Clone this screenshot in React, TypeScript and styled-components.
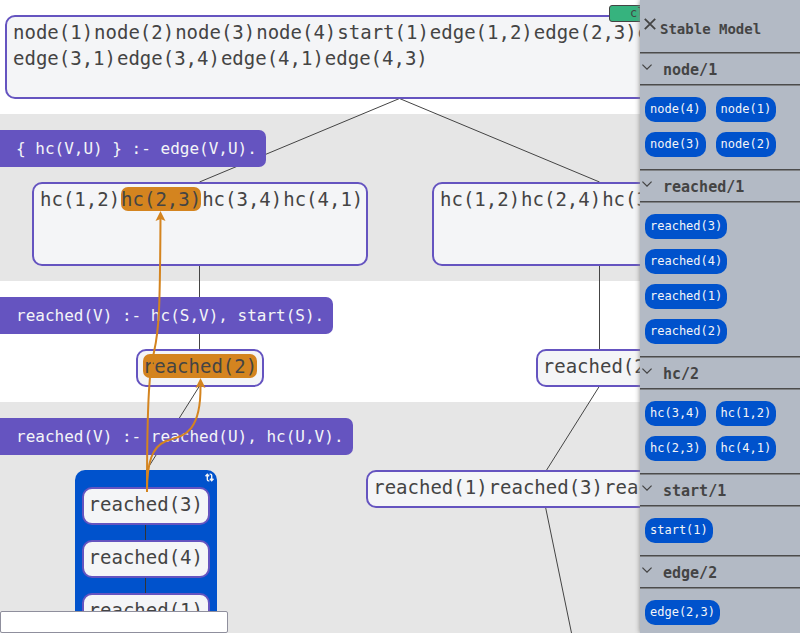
import React from 'react';
import styled, { createGlobalStyle, css } from 'styled-components';

const GlobalStyle = createGlobalStyle`
  * { box-sizing: border-box; }
  html, body, #root { height: 100%; }
  body {
    margin: 0;
    overflow: hidden;
    background: #fff;
    color: #444;
    font-family: "DejaVu Sans Mono", monospace;
  }
`;

const Page = styled.div`
  position: relative;
  height: 100%;
  overflow: hidden;
`;

const Graph = styled.main`
  position: relative;
  min-height: 100%;
  display: flex;
  flex-direction: column;
`;

const Band = styled.section<{ $shaded?: boolean }>`
  display: flex;
  flex-direction: column;
  align-items: flex-start;
  gap: 15px;
  padding: 16px 0 15px;
  background: ${(p) => (p.$shaded ? '#e6e6e6' : '#fff')};

  &:first-child { padding-top: 15px; }
`;

const Rule = styled.div`
  position: relative;
  z-index: 2;
  padding: 0 9px 0 16px;
  border-radius: 0 7px 7px 0;
  background: #6554c0;
  color: #f4f5f7;
  font-size: 16px;
  line-height: 37px;
  white-space: pre;
`;

const Branches = styled.div`
  align-self: stretch;
  display: flex;
  justify-content: space-around;
  align-items: flex-start;
`;

const Node = styled.div<{ $size?: 'root' | 'wide' }>`
  position: relative;
  z-index: 2;
  display: flex;
  flex-wrap: wrap;
  align-content: flex-start;
  column-gap: 1px;
  padding: 2px 5px 6px;
  border: 2px solid #6554c0;
  border-radius: 10px;
  background: #f4f5f7;
  ${(p) => p.$size === 'root' && css`flex: 1; margin: 0 5px; padding: 2px 6px; min-height: 84px;`}
  ${(p) => p.$size === 'wide' && css`padding: 2px 2px 2px 6px; width: 42%; min-height: 84px;`}
`;

const Atom = styled.span<{ $marked?: boolean }>`
  margin: 1px 0;
  border-radius: 7px;
  font-size: 19px;
  line-height: 24px;
  background: ${(p) => (p.$marked ? '#d4841f' : 'transparent')};
`;

const Loop = styled.div`
  position: relative;
  z-index: 2;
  display: flex;
  flex-direction: column;
  align-items: center;
  padding: 17px 7px;
  border-radius: 10px;
  background: #0052cc;
`;

const LoopLink = styled.div`
  width: 1px;
  height: 15px;
  background: #333;
`;

const LoopIcon = styled.svg`
  position: absolute;
  top: 3px;
  right: 3px;
  width: 9px;
  height: 9px;
`;

const Overlay = styled.svg<{ $front?: boolean }>`
  position: absolute;
  top: 0;
  left: 0;
  z-index: ${(p) => (p.$front ? 3 : 1)};
  width: 100%;
  height: 100%;
  overflow: visible;
  pointer-events: none;
  fill: none;
`;

const ClearButton = styled.button`
  position: absolute;
  top: 5px;
  right: 113px;
  z-index: 3;
  width: 78px;
  height: 17px;
  padding: 0;
  border: 1px solid #444;
  border-radius: 3px;
  background: #36b37e;
  color: #444;
  font: 12px/15px "DejaVu Sans Mono", monospace;
`;

const SearchInput = styled.input`
  position: absolute;
  left: 0;
  bottom: 0;
  z-index: 4;
  width: 228px;
  height: 22px;
  border: 1px solid #8f8f9d;
  border-radius: 2px;
  background: #fff;
`;

const Sidebar = styled.aside`
  position: absolute;
  top: 0;
  right: 0;
  bottom: 0;
  z-index: 5;
  width: 160px;
  overflow: hidden;
  background: #b3bac5;
  box-shadow: 0 0 5px #888;
`;

const SidebarHeader = styled.header`
  display: flex;
  align-items: flex-start;
  gap: 4px;
  height: 52px;
  padding: 18px 4px 0;
`;

const IconButton = styled.button`
  display: flex;
  padding: 0;
  border: 0;
  background: none;
  color: inherit;
`;

const Title = styled.h2`
  margin: 0;
  font-size: 14px;
  line-height: 22px;
`;

const SectionToggle = styled.button`
  display: flex;
  align-items: flex-start;
  gap: 11px;
  width: 100%;
  height: 33px;
  padding: 8px 3px 0 2px;
  border: solid #4c4c4c;
  border-width: 1px 0;
  box-shadow: inset 0 1px #808285, 0 1px #808285;
  background: none;
  color: inherit;
  font: bold 15px/18px "DejaVu Sans Mono", monospace;
  text-align: left;
`;

const ChevronIcon = styled.svg`
  flex: none;
  width: 10px;
  height: 6px;
  margin-top: 3px;
`;

const Chips = styled.div`
  display: flex;
  flex-wrap: wrap;
  gap: 10px;
  padding: 12px 5px;
`;

const Chip = styled.span`
  padding: 0 5px;
  border-radius: 10px;
  background: #0052cc;
  color: #f4f5f7;
  font-size: 12px;
  line-height: 25px;
`;

const rootAtoms = [
  'node(1)', 'node(2)', 'node(3)', 'node(4)', 'start(1)', 'edge(1,2)', 'edge(2,3)',
  'edge(2,4)', 'edge(3,1)', 'edge(3,4)', 'edge(4,1)', 'edge(4,3)',
];

const model = [
  { name: 'node/1', atoms: ['node(4)', 'node(1)', 'node(3)', 'node(2)'] },
  { name: 'reached/1', atoms: ['reached(3)', 'reached(4)', 'reached(1)', 'reached(2)'] },
  { name: 'hc/2', atoms: ['hc(3,4)', 'hc(1,2)', 'hc(2,3)', 'hc(4,1)'] },
  { name: 'start/1', atoms: ['start(1)'] },
  { name: 'edge/2', atoms: ['edge(2,3)'] },
];

type AtomsProps = { items: string[]; marked?: string };

const Atoms = ({ items, marked }: AtomsProps) => (
  <>
    {items.map((a) => (
      <Atom key={a} $marked={a === marked}>{a}</Atom>
    ))}
  </>
);

const Chevron = () => (
  <ChevronIcon viewBox="0 0 10 6" fill="none" stroke="currentColor" strokeWidth="1.3">
    <path d="M0.4 0.6 L5 5.1 L9.6 0.6" />
  </ChevronIcon>
);

export default function App() {
  return (
    <Page>
      <GlobalStyle />
      <Graph>
        <Band>
          <Branches>
            <Node $size="root"><Atoms items={rootAtoms} /></Node>
          </Branches>
        </Band>
        <Band $shaded>
          <Rule>{'{ hc(V,U) } :- edge(V,U).'}</Rule>
          <Branches>
            <Node $size="wide">
              <Atoms items={['hc(1,2)', 'hc(2,3)', 'hc(3,4)', 'hc(4,1)']} marked="hc(2,3)" />
            </Node>
            <Node $size="wide">
              <Atoms items={['hc(1,2)', 'hc(2,4)', 'hc(3,1)', 'hc(4,3)']} />
            </Node>
          </Branches>
        </Band>
        <Band>
          <Rule>reached(V) :- hc(S,V), start(S).</Rule>
          <Branches>
            <Node><Atoms items={['reached(2)']} marked="reached(2)" /></Node>
            <Node><Atoms items={['reached(2)']} /></Node>
          </Branches>
        </Band>
        <Band $shaded>
          <Rule>reached(V) :- reached(U), hc(U,V).</Rule>
          <Branches>
            <Loop>
              <LoopIcon viewBox="0 0 9 9" fill="none" stroke="#f4f5f7" strokeWidth="1.4">
                <path d="M4.4 7.9H3.6Q2.3 7.9 2.3 6.5V1.5M0.5 3.2L2.3 1.2L4.1 3.2" />
                <path d="M4.6 1.1H5.4Q6.7 1.1 6.7 2.5V7.5M4.9 5.8L6.7 7.8L8.5 5.8" />
              </LoopIcon>
              <Node><Atoms items={['reached(3)']} /></Node>
              <LoopLink />
              <Node><Atoms items={['reached(4)']} /></Node>
              <LoopLink />
              <Node><Atoms items={['reached(1)']} /></Node>
            </Loop>
            <Node><Atoms items={['reached(1)', 'reached(3)', 'reached(4)']} /></Node>
          </Branches>
        </Band>
        <Overlay stroke="#444">
          <path d="M399.5 98.5L199.5 182M399.5 98.5L599.5 182M199.5 265V350M599.5 265V350M199.5 386L146 471M599.5 386L546 471M545.5 507L571.5 633" />
        </Overlay>
        <Overlay $front stroke="#d4841f" strokeWidth="2">
          <path d="M147 492C147 392 150 368 154 352C159 330 160 310 160.5 218" />
          <path d="M147 492C147 462 152 447 166 441C180 436 201 437 200.5 386" />
          <path d="M160.5 211L165.5 221L160.5 219L155.5 221Z" fill="#d4841f" stroke="none" />
          <path d="M200.5 378L205.5 388L200.5 386L195.5 388Z" fill="#d4841f" stroke="none" />
        </Overlay>
      </Graph>
      <ClearButton type="button">clear</ClearButton>
      <SearchInput type="text" aria-label="Search" />
      <Sidebar>
        <SidebarHeader>
          <IconButton type="button" aria-label="Close">
            <svg width="12" height="12" viewBox="0 0 12 12" stroke="currentColor" strokeWidth="1.8">
              <path d="M0.8 0.8L11.2 11.2M11.2 0.8L0.8 11.2" />
            </svg>
          </IconButton>
          <Title>Stable Model</Title>
        </SidebarHeader>
        {model.map((s) => (
          <section key={s.name}>
            <SectionToggle type="button"><Chevron />{s.name}</SectionToggle>
            <Chips>{s.atoms.map((a) => <Chip key={a}>{a}</Chip>)}</Chips>
          </section>
        ))}
      </Sidebar>
    </Page>
  );
}
